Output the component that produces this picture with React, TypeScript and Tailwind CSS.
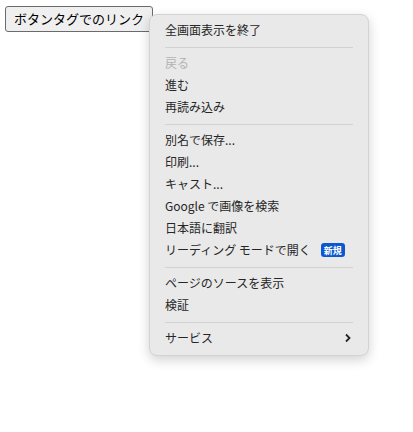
import React from "react";

const Sep = () => (
  <div className="h-[11px] flex items-center px-[15px]">
    <div className="h-px w-full bg-[#d2d2d2]" />
  </div>
);

const Item = ({ children, disabled }: { children: React.ReactNode; disabled?: boolean }) => (
  <div
    className={`h-[22px] flex items-center whitespace-nowrap pl-[15px] pr-[15px] pb-[2px] text-[12px] leading-none ${
      disabled ? "text-[#b3b3b3]" : "text-[#262626]"
    }`}
  >
    {children}
  </div>
);

export default function App() {
  return (
    <div
      className="relative w-[413px] h-[432px] bg-white"
      style={{ fontFamily: '"Noto Sans CJK JP", "Noto Sans", sans-serif' }}
    >
      <div className="pt-[5px] pl-[5px]">
        <button className="h-[26px] px-[8px] pb-[1px] border border-[#6b6b6b] rounded-[3px] bg-[#efefef] text-[13px] text-black leading-none whitespace-nowrap">
          ボタンタグでのリンク
        </button>
      </div>
      <div className="absolute left-[149px] top-[14px] w-[220px] py-[5px] rounded-[8px] bg-[#e9e9e9] border border-[#d3d3d3] shadow-[0_4px_12px_rgba(0,0,0,0.18)]">
        <Item>全画面表示を終了</Item>
        <Sep />
        <Item disabled>戻る</Item>
        <Item>進む</Item>
        <Item>再読み込み</Item>
        <Sep />
        <Item>別名で保存...</Item>
        <Item>印刷...</Item>
        <Item>キャスト...</Item>
        <Item>Google で画像を検索</Item>
        <Item>日本語に翻訳</Item>
        <Item>
          <span>リーディング モードで開く</span>
          <span className="ml-[10px] h-[14px] px-[3px] rounded-[3px] bg-[#0b57d0] text-white text-[9px] font-bold flex items-center">
            新規
          </span>
        </Item>
        <Sep />
        <Item>ページのソースを表示</Item>
        <Item>検証</Item>
        <Sep />
        <Item>
          <span className="flex-1">サービス</span>
          <svg width="8" height="10" viewBox="0 0 8 10" className="mr-[1px]">
            <path d="M2 1.5 L5.5 5 L2 8.5" stroke="#262626" strokeWidth="1.8" fill="none" />
          </svg>
        </Item>
      </div>
    </div>
  );
}
